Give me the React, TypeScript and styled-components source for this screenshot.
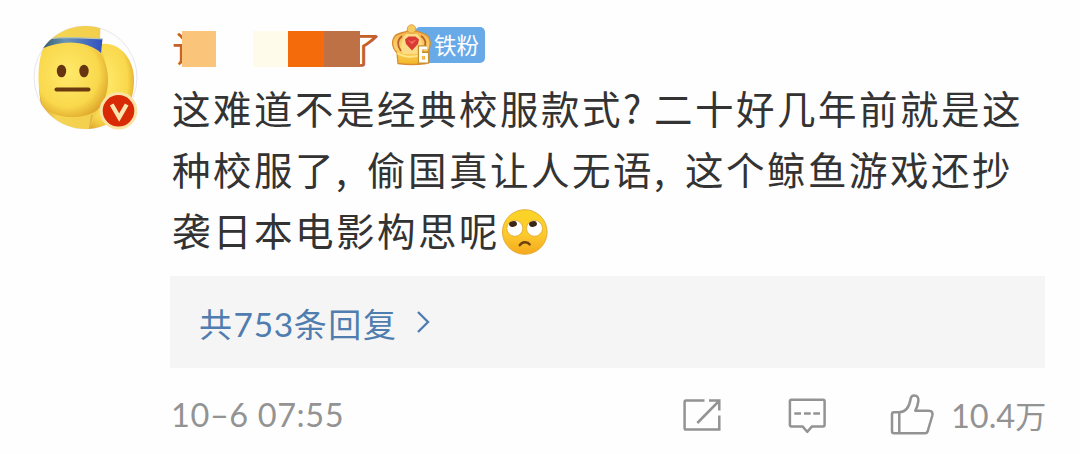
import React from "react";
import styled, { createGlobalStyle } from "styled-components";

const GlobalStyle = createGlobalStyle`
  * { box-sizing: border-box; }
  body { margin: 0; background: #fefefe; }
`;

const cjk = `"Noto Sans CJK SC", sans-serif`;

const Comment = styled.article`
  display: flex;
  width: 1080px;
  height: 454px;
  overflow: hidden;
  background: #fefefe;
  font-family: ${cjk};
`;

const AvatarColumn = styled.div`
  flex: none;
  width: 171px;
  padding: 22px 0 0 30px;
`;

const Drawing = styled.svg`
  display: block;
  flex: none;
`;

const Content = styled.div`
  width: 874px;
  padding-top: 24px;
`;

const Header = styled.header`
  display: flex;
  align-items: flex-start;
  height: 40px;
`;

const Name = styled.div`
  display: flex;
  align-items: center;
  width: 221px;
  height: 36px;
  margin-top: 6.5px;
  padding-left: 1px;
  color: #c4612a;
  font-size: 37px;
  line-height: 36px;
`;

const FirstGlyph = styled.span`
  width: 37px;
  margin: -1px -27px 0 0;
`;

const LastGlyph = styled.span`
  width: 37px;
  margin: -1px 0 0 -15px;
`;

const Mosaic = styled.span<{ $width: number; $color: string }>`
  position: relative;
  z-index: 1;
  width: ${(p) => p.$width}px;
  height: 36px;
  background: ${(p) => p.$color};
`;

const FanBadge = styled.div`
  display: flex;
  align-items: center;
  height: 42px;
`;

const FanLabel = styled.span`
  width: 70px;
  height: 36px;
  margin-left: -17px;
  padding-left: 19px;
  border-radius: 5px;
  background: #68a9e7;
  color: #fff;
  font-size: 22.5px;
  line-height: 35px;
  white-space: nowrap;
`;

const Crown = styled(Drawing)`
  position: relative;
`;

const Message = styled.p`
  margin: 13px 0 0 1px;
  color: #333;
  font-size: 38.5px;
  letter-spacing: 2.5px;
  line-height: 61px;
  white-space: nowrap;
`;

const Line = styled.span`
  display: flex;
  align-items: center;
  height: 61px;
`;

const Mark = styled.span`
  width: 31px;
`;

const Replies = styled.div`
  display: flex;
  align-items: center;
  height: 92px;
  margin: 16px 0 0 -1px;
  padding: 2px 0 0 29px;
  background: #f5f5f5;
  color: #507daf;
  font-size: 33px;
  letter-spacing: 1.6px;
  line-height: 48px;
`;

const Digits = styled.span<{ $size: number; $spacing: number }>`
  font-family: Lato, ${cjk};
  font-size: ${(p) => p.$size}px;
  letter-spacing: ${(p) => p.$spacing}px;
`;

const Chevron = styled(Drawing)`
  margin: -2px 0 0 18px;
`;

const Footer = styled.footer`
  display: flex;
  align-items: center;
  height: 94px;
  color: #939393;
  line-height: 40px;
`;

const Actions = styled.div`
  display: flex;
  align-items: center;
  margin-left: auto;
`;

const Action = styled.div<{ $width: number }>`
  display: flex;
  align-items: center;
  width: ${(p) => p.$width}px;
  white-space: nowrap;
`;

const Count = styled.span`
  margin-left: 16px;
  font-size: 31px;
`;

const AvatarFace = () => (
  <Drawing width="112" height="112" viewBox="30 22 112 112">
    <defs>
      <clipPath id="round"><circle cx="85.5" cy="77.5" r="51.5" /></clipPath>
      <radialGradient id="skin" cx="0.42" cy="0.42" r="0.64">
        <stop offset="0" stopColor="#ffe96a" />
        <stop offset="0.7" stopColor="#f9d84c" />
        <stop offset="1" stopColor="#dda52a" />
      </radialGradient>
      <linearGradient id="body" x1="0" x2="1">
        <stop offset="0" stopColor="#d59d2c" />
        <stop offset="0.25" stopColor="#f5d552" />
        <stop offset="1" stopColor="#f2cd4c" />
      </linearGradient>
      <linearGradient id="band" x1="0" x2="1">
        <stop offset="0" stopColor="#31586a" />
        <stop offset="0.4" stopColor="#6a94b5" />
        <stop offset="1" stopColor="#2f50c4" />
      </linearGradient>
    </defs>
    <circle cx="85.5" cy="77.5" r="51.5" fill="#fdfdfd" stroke="#e8e6ee" />
    <g clipPath="url(#round)">
      <path d="M100 44C119 41 134 58 134 80C134 108 118 132 86 132Z" fill="url(#skin)" />
      <path d="M45 22H100C101 34 99 41 101 49C109 66 109 96 98 110L88 132H50C38 112 35 68 45 46Z" fill="url(#body)" />
      <path d="M43 49C58 39 88 38 101 55C112 70 110 100 96 111C80 121 54 118 43 107C37 92 37 62 43 49Z" fill="url(#skin)" />
      <path d="M46 40C64 36 83 38 102.5 39L101 53C88 40.500 62 39 41 49Z" fill="url(#band)" />
      <path d="M48 39C64 36 83 38 103 39" fill="none" stroke="#b9c6b5" strokeWidth="1.2" />
      <path d="M92 115L89 132" stroke="#e0b040" strokeWidth="1.5" />
    </g>
    <ellipse cx="61.5" cy="71" rx="4.7" ry="6.3" fill="#663411" />
    <ellipse cx="84" cy="71" rx="4.7" ry="6.3" fill="#663411" />
    <path d="M56.5 89.5H88.5" stroke="#6b3a10" strokeWidth="4" strokeLinecap="round" />
    <circle cx="118.5" cy="110.8" r="17.3" fill="#d92a08" stroke="#fbe3a4" strokeWidth="3" />
    <path d="M111.7 104.5L119.2 117.5L126.7 104.5" fill="none" stroke="#fbe5ae" strokeWidth="4.2" />
  </Drawing>
);

const CrownIcon = () => (
  <Crown width="40" height="42" viewBox="392 24 40 42">
    <defs>
      <linearGradient id="gold" x1="0" y1="0" x2="0" y2="1">
        <stop offset="0" stopColor="#f4b24a" />
        <stop offset="0.5" stopColor="#fbd268" />
        <stop offset="1" stopColor="#f4b828" />
      </linearGradient>
    </defs>
    <path d="M398 63.5L397 53C392 48 391 41 395 36C399 32 405 33 407 31H417C420 33 427 33 429 38C432 44 429 50 427 54L426 63.5Q412 65.5 398 63.5Z" fill="url(#gold)" stroke="#d98c32" strokeWidth="1.3" />
    <circle cx="411.5" cy="29" r="4.2" fill="#f8cb62" stroke="#dfa143" />
    <path d="M402 36C397 40 397 46 401 51M421 36C427 40 426 46 423 50" fill="none" stroke="#b8612d" strokeWidth="1.8" />
    <path d="M403 54C400 47 401 39 406 34H417C423 39 423 47 420 54Z" fill="#fddc88" />
    <path d="M397 53Q411 61 427 52" fill="none" stroke="#ffe789" strokeWidth="2" />
    <path d="M405 39.5L408.5 36.5H415.5L419 39.5L418 44L412 50.5L406 44Z" fill="#d93a32" />
    <path d="M407.5 39.5L411 41.5L416.5 39.5L412 44.5Z" fill="#f4685c" />
    <path d="M427 47.5H420V61.5H427V53.5H420" fill="none" stroke="#c8902e" strokeWidth="4.4" />
    <path d="M427 48H420.5V61H426.5V54.5H420.5" fill="none" stroke="#fff" strokeWidth="2.9" />
  </Crown>
);

const EmojiDrawing = styled(Drawing)`
  margin: 5px 0 0 1px;
`;

const RollingEyes = () => (
  <EmojiDrawing width="48" height="48" viewBox="501 208 48 48">
    <defs>
      <linearGradient id="emoji" x1="0" y1="0" x2="0" y2="1">
        <stop offset="0" stopColor="#fbd526" />
        <stop offset="0.55" stopColor="#fcca2e" />
        <stop offset="1" stopColor="#f5a81d" />
      </linearGradient>
    </defs>
    <circle cx="524.8" cy="232" r="22.3" fill="url(#emoji)" stroke="#e5ac35" strokeWidth="1" />
    <circle cx="514.8" cy="228.3" r="8" fill="#fff" stroke="#dfa429" strokeWidth="0.8" />
    <circle cx="534.5" cy="228.3" r="8" fill="#fff" stroke="#dfa429" strokeWidth="0.8" />
    <ellipse cx="513" cy="224" rx="4" ry="2.8" fill="#3c2618" transform="rotate(-12 513 224)" />
    <ellipse cx="533" cy="224" rx="4" ry="2.8" fill="#3c2618" transform="rotate(-12 533 224)" />
    <path d="M519.8 245.2C522 241.5 527.5 241.2 529.6 244.4" fill="none" stroke="#70400f" strokeWidth="2.5" strokeLinecap="round" />
  </EmojiDrawing>
);

const stroke = { fill: "none", stroke: "#939393", strokeWidth: 2.5 } as const;

const ShareIcon = () => (
  <Drawing width="40" height="44" viewBox="682 393 40 44">
    <path {...stroke} d="M704.5 400.6H686Q684.6 400.6 684.6 402V428Q684.6 429.6 686 429.6H719.3V415.5M709 400.6H719.3V410.5M697.3 423L719 401" />
  </Drawing>
);

const CommentIcon = () => (
  <Drawing width="40" height="44" viewBox="787 393 40 44">
    <path {...stroke} strokeLinejoin="round" d="M791.5 399.8H823Q824.6 399.8 824.6 401.4V424.8Q824.6 426.4 823 426.4H812L807.2 431.8L802.5 426.4H791.5Q789.9 426.4 789.9 424.8V401.4Q789.9 399.8 791.5 399.8Z" />
    <path {...stroke} d="M794.3 413.6H801M804 413.6H810.7M813.3 413.6H820" />
  </Drawing>
);

const LikeIcon = () => (
  <Drawing width="45" height="44" viewBox="890 393 45 44">
    <path {...stroke} strokeLinejoin="round" d="M899.3 412.3C906 411.8 909.5 406 910.6 399C911 396.5 912.2 395.5 914.2 395.5C917.5 395.5 918.8 398 918.3 401.5C917.8 405 916.8 408 915.3 410.7H928.5C932.3 410.7 933 413 932.2 416L927.6 431.5Q927 433.2 925.2 433.2H894Q892 433.2 892 431.2V414.3Q892 412.3 894 412.3H899.3V433" />
  </Drawing>
);

export default function App() {
  return (
    <>
      <GlobalStyle />
      <Comment>
        <AvatarColumn>
          <AvatarFace />
        </AvatarColumn>
        <Content>
          <Header>
            <Name>
              <FirstGlyph>认</FirstGlyph>
              <Mosaic $width={34} $color="#fac47a" />
              <Mosaic $width={37} $color="#fefefe" />
              <Mosaic $width={35} $color="#fffbeb" />
              <Mosaic $width={36} $color="#f36b0b" />
              <Mosaic $width={36} $color="#bd7145" />
              <LastGlyph>了</LastGlyph>
            </Name>
            <FanBadge>
              <CrownIcon />
              <FanLabel>铁粉</FanLabel>
            </FanBadge>
          </Header>
          <Message>
            <Line>这难道不是经典校服款式<Mark>?</Mark>二十好几年前就是这</Line>
            <Line>种校服了<Mark>,</Mark>偷国真让人无语<Mark>,</Mark>这个鲸鱼游戏还抄</Line>
            <Line>袭日本电影构思呢<RollingEyes /></Line>
          </Message>
          <Replies>
            <span>共<Digits $size={33.5} $spacing={0.6}>753</Digits>条回复</span>
            <Chevron width="16" height="26" viewBox="0 0 16 26">
              <path d="M2 3L12 13L2 23" fill="none" stroke="#507daf" strokeWidth="2.4" />
            </Chevron>
          </Replies>
          <Footer>
            <Digits $size={32.5} $spacing={0.6}>10–6 07:55</Digits>
            <Actions>
              <Action $width={105}><ShareIcon /></Action>
              <Action $width={103}><CommentIcon /></Action>
              <Action $width={155}>
                <LikeIcon />
                <Count><Digits $size={32.5} $spacing={0}>10.4</Digits>万</Count>
              </Action>
            </Actions>
          </Footer>
        </Content>
      </Comment>
    </>
  );
}
